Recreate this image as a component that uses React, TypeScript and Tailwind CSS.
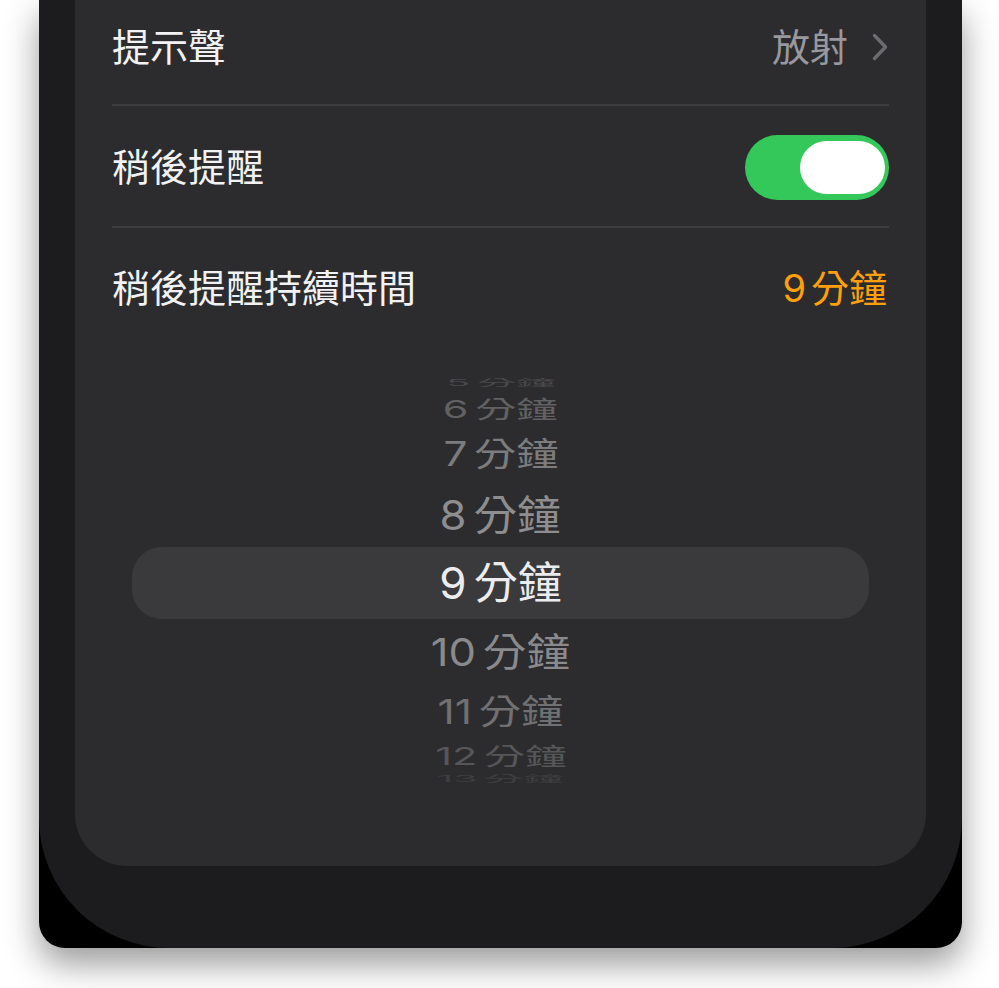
import React from 'react';

type PickerRow = {
    num: number;
    height: string;
    text: string;
    scale: string;
};

const pickerRows: PickerRow[] = [
    {num: 5, height: 'h-[20px]', text: 'text-[#48484a]', scale: 'scale-y-[0.2] scale-x-[0.9]'},
    {num: 6, height: 'h-[32px]', text: 'text-[#616163]', scale: 'scale-y-[0.55] scale-x-[0.94]'},
    {num: 7, height: 'h-[58px]', text: 'text-[#7c7c7e]', scale: 'scale-y-[0.76] scale-x-[0.96]'},
    {num: 8, height: 'h-[64px]', text: 'text-[#8e8e90]', scale: 'scale-y-[0.93] scale-x-[0.99]'},
    {num: 9, height: 'h-[72px]', text: 'text-[#ececee]', scale: 'scale-y-100'},
    {num: 10, height: 'h-[66px]', text: 'text-[#8a8a8c]', scale: 'scale-y-[0.88] scale-x-[0.99]'},
    {num: 11, height: 'h-[54px]', text: 'text-[#707072]', scale: 'scale-y-[0.78] scale-x-[0.96]'},
    {num: 12, height: 'h-[34px]', text: 'text-[#565658]', scale: 'scale-y-[0.55] scale-x-[0.94]'},
    {num: 13, height: 'h-[12px]', text: 'text-[#3e3e40]', scale: 'scale-y-[0.2] scale-x-[0.9]'},
];

const Chevron = () => (
    <svg width="18" height="28" viewBox="0 0 18 28" fill="none">
        <polyline
            points="3.5,2.5 14.5,14 3.5,25.5"
            stroke="#6c6c70"
            strokeWidth="3.4"
            strokeLinecap="round"
            strokeLinejoin="round"
        />
    </svg>
);

const Divider = () => <div className="h-[2px] bg-[#3d3d40]"/>;

const App: React.FC = () => {
    return (
        <div
            className="w-full h-[988px] bg-white overflow-hidden"
            style={{fontFamily: '"Inter", "Noto Sans CJK TC", sans-serif'}}
        >
            <div className="ml-[39px] w-[923px] h-[948px] bg-black rounded-b-[26px] shadow-[0_16px_34px_rgba(0,0,0,0.4)]">
                <div className="h-full bg-[#1c1c1e] rounded-b-[130px] px-[36px]">
                    <div className="h-[866px] bg-[#2c2c2e] rounded-b-[52px] px-[37px] flex flex-col">
                        {/* 提示聲 */}
                        <div className="h-[104px] pb-[10px] flex items-center justify-between">
                            <span className="text-[38px] leading-none text-[#f2f2f4]">提示聲</span>
                            <div className="flex items-center gap-[23px]">
                                <span className="text-[38px] leading-none text-[#98989e]">放射</span>
                                <Chevron/>
                            </div>
                        </div>
                        <Divider/>

                        {/* 稍後提醒 */}
                        <div className="h-[120px] pt-[2px] flex items-center justify-between">
                            <span className="text-[38px] leading-none text-[#f2f2f4]">稍後提醒</span>
                            <div className="w-[144px] h-[65px] rounded-full bg-[#34c759] flex items-center justify-end pr-[4px]">
                                <div className="w-[85px] h-[53px] rounded-full bg-white"/>
                            </div>
                        </div>
                        <Divider/>

                        {/* 稍後提醒持續時間 */}
                        <div className="h-[120px] flex items-center justify-between">
                            <span className="text-[38px] leading-none text-[#f2f2f4]">稍後提醒持續時間</span>
                            <span className="text-[38px] leading-none text-[#ff9f0a] mr-[2px]">
                                9<span className="ml-[5px]">分鐘</span>
                            </span>
                        </div>

                        {/* picker wheel */}
                        <div className="mt-[25px] mx-[20px] flex flex-col overflow-hidden">
                            {pickerRows.map((row) => (
                                <div
                                    key={row.num}
                                    className={`${row.height} flex items-center justify-center ${row.num === 9 ? 'bg-[#3a3a3c] rounded-[30px]' : ''}`}
                                >
                                    <span className={`text-[44px] leading-none whitespace-nowrap ${row.text} ${row.scale}`}>
                                        {row.num}<span className="ml-[7px]">分鐘</span>
                                    </span>
                                </div>
                            ))}
                        </div>
                    </div>
                </div>
            </div>
        </div>
    );
};

export default App;
